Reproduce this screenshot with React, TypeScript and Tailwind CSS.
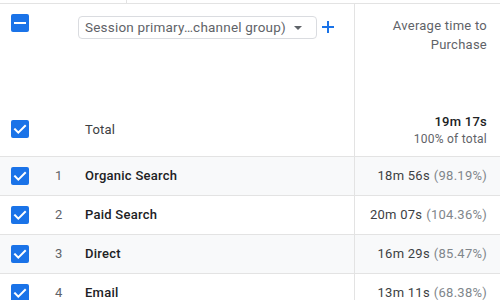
import React from 'react';

type Row = { rank: number; label: string; value: string; pct: string };

const ROWS: Row[] = [
  { rank: 1, label: 'Organic Search', value: '18m 56s', pct: '(98.19%)' },
  { rank: 2, label: 'Paid Search', value: '20m 07s', pct: '(104.36%)' },
  { rank: 3, label: 'Direct', value: '16m 29s', pct: '(85.47%)' },
  { rank: 4, label: 'Email', value: '13m 11s', pct: '(68.38%)' },
];

const Checkbox: React.FC<{ indeterminate?: boolean }> = ({ indeterminate }) => (
  <div className="w-[18px] h-[18px] rounded-[2px] bg-[#1a73e8] flex items-center justify-center shrink-0">
    {indeterminate ? (
      <div className="w-[12px] h-[2px] bg-white" />
    ) : (
      <svg width="18" height="18" viewBox="0 0 18 18" fill="none">
        <path d="M4 9.3l3.3 3.3L14 6" stroke="white" strokeWidth="2" strokeLinecap="square" />
      </svg>
    )}
  </div>
);

export default function App() {
  return (
    <div className="w-[500px] h-[300px] overflow-hidden bg-white font-['Roboto',sans-serif] text-[13px] tracking-[0.25px] text-[#202124]">
      {/* strip above the table */}
      <div className="h-[4px] border-b border-[#e3e3e3] flex">
        <div className="w-[127px] border-r border-[#e3e3e3]" />
      </div>

      {/* header */}
      <div className="flex h-[153px] border-b border-[#e3e3e3]">
        <div className="w-[355px] border-r border-[#e3e3e3] flex flex-col justify-between pl-[11px] pt-[10px] pb-[17px]">
          <div className="flex items-start">
            <Checkbox indeterminate />
            <div className="ml-[49px] mt-[2px] w-[239px] h-[23px] border border-[#dadce0] rounded-[4px] flex items-center pl-[6px] pr-[14px] text-[13.5px] tracking-[0.2px] text-[#5f6368]">
              <span className="flex-1 truncate">Session primary…channel group)</span>
              <svg width="8" height="4" viewBox="0 0 8 4" className="ml-[4px]">
                <path d="M0 0h8L4 4z" fill="#5f6368" />
              </svg>
            </div>
            <svg width="12" height="12" viewBox="0 0 12 12" className="ml-[5px] mt-[7px]">
              <path d="M6 0v12M0 6h12" stroke="#1a73e8" strokeWidth="2" />
            </svg>
          </div>
          <div className="flex items-center">
            <Checkbox />
            <span className="ml-[56px] text-[#3c4043]">Total</span>
          </div>
        </div>
        <div className="flex-1 flex flex-col justify-between items-end text-right pr-[13px] pt-[12px] pb-[9px]">
          <div className="leading-[19px] text-[#5f6368]">
            Average time to
            <br />
            Purchase
          </div>
          <div className="flex flex-col items-end">
            <span className="leading-[19px] font-medium text-[#202124]">19m 17s</span>
            <span className="leading-[16px] text-[12px] text-[#5f6368]">100% of total</span>
          </div>
        </div>
      </div>

      {/* rows */}
      {ROWS.map((r, i) => (
        <div
          key={r.rank}
          className={`flex h-[39px] border-b border-[#e3e3e3] ${i % 2 === 0 ? 'bg-[#f8f9fa]' : 'bg-white'}`}
        >
          <div className="w-[355px] border-r border-[#e3e3e3] flex items-center pl-[11px]">
            <Checkbox />
            <span className="w-[56px] pl-[26px] text-[#5f6368]">{r.rank}</span>
            <span className="font-medium text-[#202124]">{r.label}</span>
          </div>
          <div className="flex-1 flex items-center justify-end pr-[13px]">
            <span className="text-[#3c4043]">{r.value}</span>
            <span className="ml-[4px] text-[#80868b]">{r.pct}</span>
          </div>
        </div>
      ))}
    </div>
  );
}
